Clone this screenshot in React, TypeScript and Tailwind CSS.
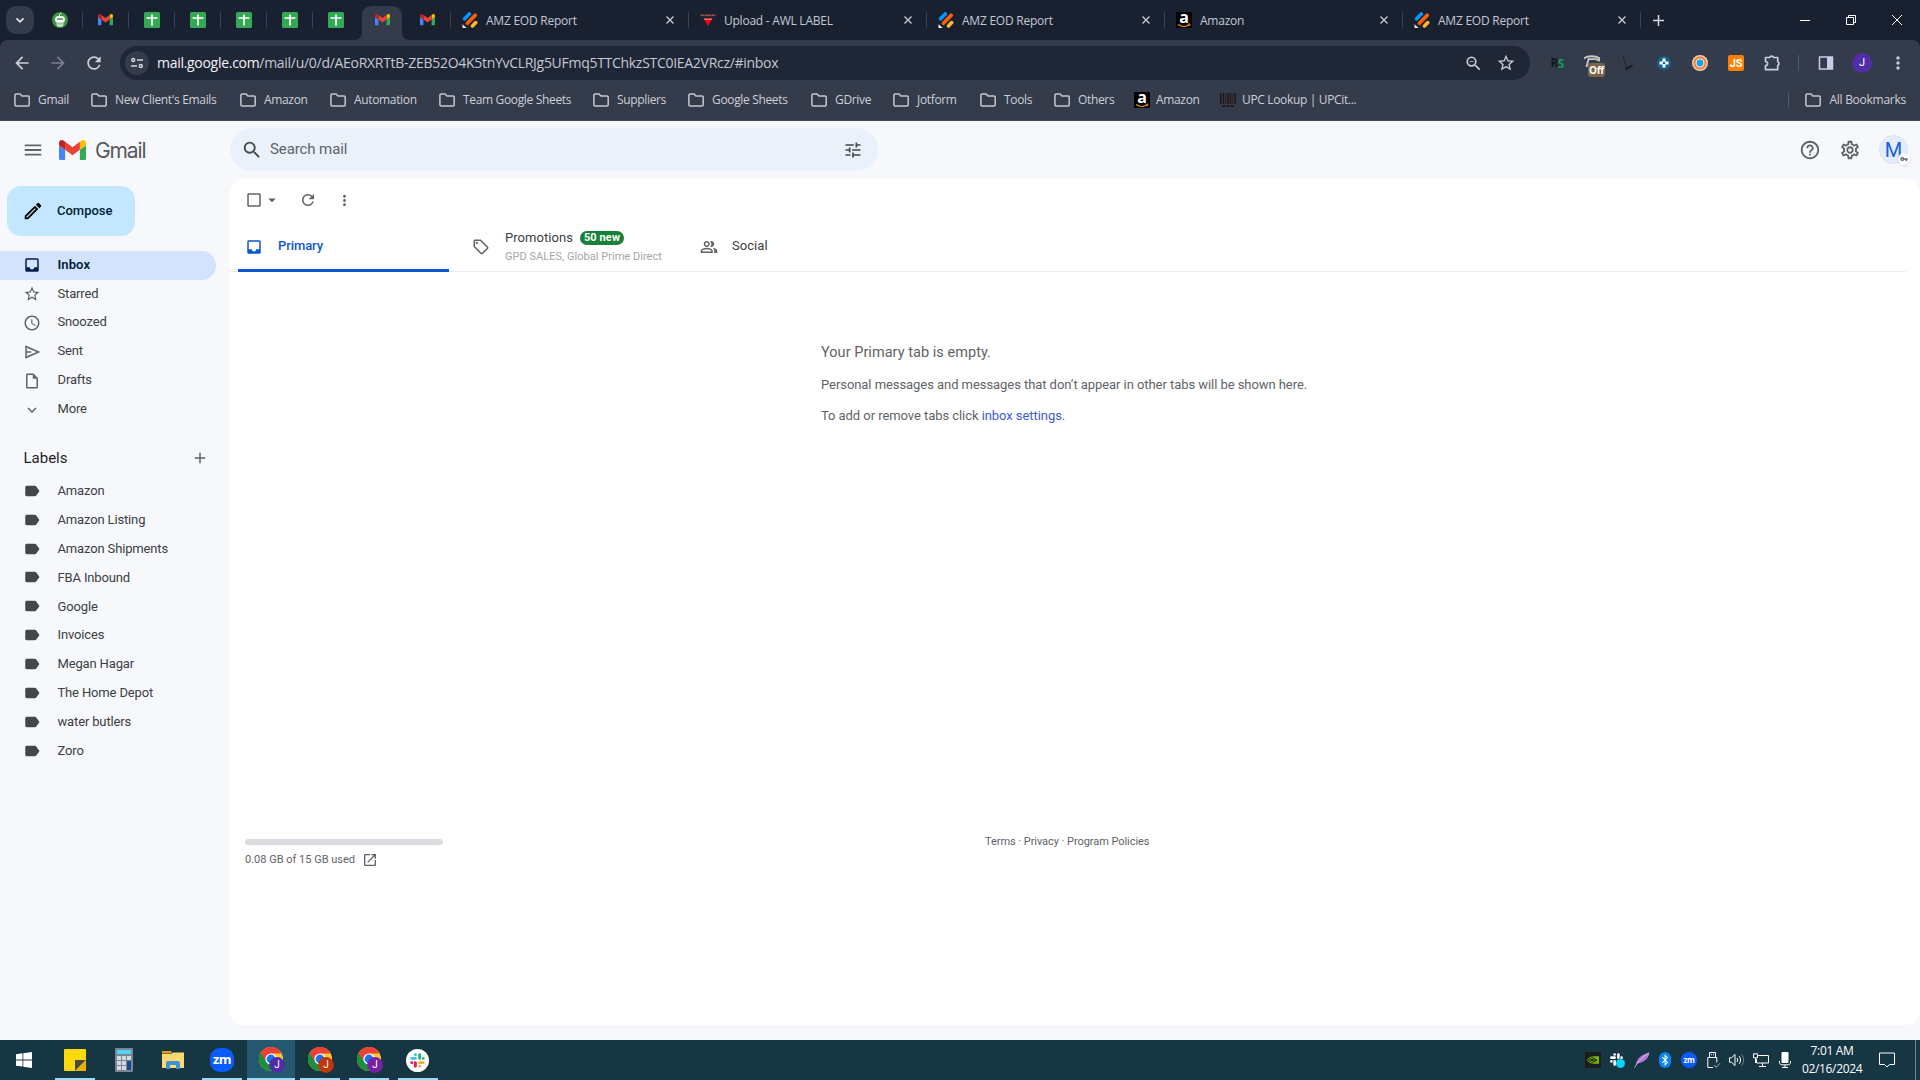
import React from 'react';
import {
  MdAccessTime,
  MdAdd,
  MdArrowBack,
  MdArrowDropDown,
  MdArrowForward,
  MdCheckBoxOutlineBlank,
  MdExpandMore,
  MdHelpOutline,
  MdInbox,
  MdLabel,
  MdMenu,
  MdMoreVert,
  MdOpenInNew,
  MdOutlineInsertDriveFile,
  MdOutlineLocalOffer,
  MdOutlineModeEdit,
  MdOutlinePeopleAlt,
  MdOutlineSettings,
  MdRefresh,
  MdSearch,
  MdStarBorder,
  MdTune,
  MdVpnKey,
  MdZoomOut,
} from 'react-icons/md';
import { FaBluetoothB } from 'react-icons/fa';

/* ---------- brand icons ---------- */

const GmailLogo = ({ className }: { className: string }) => (
  <svg viewBox="52 42 88 66" className={className}>
    <path fill="#4285f4" d="M58 108h14V74L52 59v43c0 3.32 2.69 6 6 6" />
    <path fill="#34a853" d="M120 108h14c3.32 0 6-2.69 6-6V59l-20 15" />
    <path fill="#fbbc04" d="M120 48v26l20-15v-8c0-7.42-8.47-11.65-14.4-7.2" />
    <path fill="#ea4335" d="M72 74V48l24 18 24-18v26L96 92" />
    <path fill="#c5221f" d="M52 51v8l20 15V48l-5.600-4.200c-5.940-4.450-14.400-.220-14.400 7.200" />
  </svg>
);

const SheetsIcon = () => (
  <svg viewBox="0 0 16 16" className="h-4 w-4">
    <rect width="16" height="16" rx="1.500" fill="#34a853" />
    <path d="M2.500 6h11M8 2.500v11" stroke="#fff" strokeWidth="1.700" />
  </svg>
);

const RobotIcon = () => (
  <svg viewBox="0 0 16 16" className="h-4 w-4">
    <circle cx="8" cy="8" r="8" fill="#3f9142" />
    <path d="M7.500 5V2.300l2-1" stroke="#fff" strokeWidth="1" fill="none" />
    <rect x="3.200" y="4.300" width="9.600" height="6.400" rx="2.200" fill="#fff" />
    <rect x="4.800" y="6.200" width="6.400" height="1.600" rx=".8" fill="#3f9142" />
    <path d="M4.200 11.600h7.600l-1.200 2.800H5.400z" fill="#fff" />
    <path d="M5 12.800h6" stroke="#3f9142" strokeWidth=".6" />
  </svg>
);

const JotformIcon = () => (
  <svg viewBox="0 0 16 16" className="h-4 w-4">
    <g strokeLinecap="round" strokeWidth="3.600">
      <path d="M2.600 6.800 7.300 2" stroke="#0099ff" />
      <path d="M5.400 11.300 13.200 3.200" stroke="#ff6100" />
      <path d="M10.500 13.900l3.200-3.300" stroke="#ffb629" />
    </g>
    <path d="M.5 12.200v3.300c0 .3.200.5.500.5h3.700z" fill="#fff" />
  </svg>
);

const AwlIcon = () => (
  <svg viewBox="0 0 16 16" className="h-4 w-4">
    <path d="M0 2.200h16v2.300H0z" fill="#5b2733" />
    <path d="M1 3.300h14" stroke="#b98f55" strokeWidth="1" strokeDasharray="1.200 1" />
    <path d="M3.600 6.500h8.800L8 14z" fill="#f5040a" />
    <path d="M3.600 6.500h8.800l-.8 1.500H4.500z" fill="#ff6a6e" />
  </svg>
);

const AmazonIcon = () => (
  <div className="relative flex h-4 w-4 shrink-0 justify-center bg-black">
    <span className="h-4 text-[16px] leading-[11px] font-bold tracking-normal text-white">a</span>
    <svg viewBox="0 0 16 5" className="absolute bottom-0 left-0 h-[5px] w-4">
      <path d="M2.200 1.500c3.500 2.600 8 2.500 11 .3" stroke="#ff9900" strokeWidth="1.200" fill="none" />
      <path d="M11.800 1.200l2.300-.2-.6 2.200" stroke="#ff9900" strokeWidth=".8" fill="none" />
    </svg>
  </div>
);

const BarcodeIcon = () => (
  <svg viewBox="0 0 16 16" className="h-4 w-4">
    <path d="M.8 1v11M3.500 1v11M8 1v11M10.500 1v11M15.200 1v11" stroke="#231815" strokeWidth="1.500" />
    <path d="M5.800 1v11M12.800 1v11" stroke="#231815" strokeWidth=".8" />
    <path d="M2.500 14h3M6.500 14h3M10.500 14h3" stroke="#231815" strokeWidth="1.800" />
  </svg>
);

const FolderIcon = () => (
  <svg viewBox="0 0 16 16" className="h-4 w-4 shrink-0">
    <path d="M.9 3.200c0-.7.500-1.200 1.200-1.200h4l1.800 1.900h6.100c.7 0 1.200.5 1.200 1.200v7.700c0 .7-.5 1.200-1.200 1.200H2.100c-.7 0-1.200-.5-1.200-1.200z" fill="none" stroke="#c7c9cf" strokeWidth="1.500" />
  </svg>
);

const SendIcon = ({ className }: { className: string }) => (
  <svg viewBox="0 0 24 24" className={className} fill="none" stroke="currentColor" strokeWidth="2">
    <path d="M4 4.600 20.800 12 4 19.400zM4 12h7" />
  </svg>
);

const PuzzleIcon = () => (
  <svg viewBox="0 0 18 18" className="ml-[19px] h-[18px] w-[18px]">
    <path d="M2.500 3.500h4.200a2 2 0 0 1 3.800 0h4.200v4.200a2 2 0 0 1 0 3.800v4.200H2.500v-4a2.100 2.100 0 0 0 0-4.200z" fill="none" stroke="#c7cde6" strokeWidth="1.700" strokeLinejoin="round" />
  </svg>
);

const ChromeIcon = ({ letter, color }: { letter: string; color: string }) => (
  <svg viewBox="0 0 26 26" className="h-[26px] w-[26px]">
    <circle cx="12" cy="12" r="12" fill="#fcc934" />
    <path d="M1.600 6A12 12 0 0 0 12 24l5.200-9L12 12z" fill="#1e8e3e" />
    <path d="M12 6.500h10.700A12 12 0 0 0 1.600 6l5.200 8z" fill="#ea4335" />
    <circle cx="12" cy="12" r="5.600" fill="#fff" />
    <circle cx="12" cy="12" r="4.400" fill="#1a73e8" />
    <circle cx="18" cy="18" r="7.900" fill={color} />
    <text x="18" y="21.300" textAnchor="middle" fontSize="10" fill="#fff" fontFamily="Roboto, sans-serif">{letter}</text>
  </svg>
);

const SlackMark = ({ className, mono }: { className: string; mono?: boolean }) => (
  <svg viewBox="0 0 16 16" className={className}>
    <g strokeLinecap="round" strokeWidth="2.800">
      <path d="M6 2.600v0M2.600 6H6" stroke={mono ? '#fff' : '#36c5f0'} />
      <path d="M13.400 6v0M10 2.600V6" stroke={mono ? '#fff' : '#2eb67d'} />
      <path d="M10 13.400v0M10 10h3.400" stroke={mono ? '#fff' : '#ecb22e'} />
      <path d="M2.600 10v0M6 10v3.400" stroke={mono ? '#fff' : '#e01e5a'} />
    </g>
  </svg>
);

/* ---------- browser chrome ---------- */

const pinnedTabs: { icon: React.ReactNode; active?: boolean; divider?: boolean }[] = [
  { icon: <RobotIcon />, divider: true },
  { icon: <GmailLogo className="w-[15px]" />, divider: true },
  { icon: <SheetsIcon />, divider: true },
  { icon: <SheetsIcon />, divider: true },
  { icon: <SheetsIcon />, divider: true },
  { icon: <SheetsIcon />, divider: true },
  { icon: <SheetsIcon /> },
  { icon: <GmailLogo className="w-[15px]" />, active: true },
  { icon: <GmailLogo className="w-[15px]" />, divider: true },
];

const tabs = [
  { icon: <JotformIcon />, title: 'AMZ EOD Report' },
  { icon: <AwlIcon />, title: 'Upload - AWL LABEL' },
  { icon: <JotformIcon />, title: 'AMZ EOD Report' },
  { icon: <AmazonIcon />, title: 'Amazon' },
  { icon: <JotformIcon />, title: 'AMZ EOD Report' },
];

const TabStrip = () => (
  <div className="flex h-10 items-center bg-[#192131] pl-1.5">
    <div className="flex h-7 w-7 items-center justify-center rounded-[10px] bg-[#343b4b]">
      <svg viewBox="0 0 10 10" className="h-2.5 w-2.5">
        <path d="M1.500 3.300 5 6.800l3.500-3.500" fill="none" stroke="#e3e5ea" strokeWidth="1.700" />
      </svg>
    </div>
    <div className="flex h-full pl-[3px]">
      {pinnedTabs.map((tab, i) =>
        tab.active ? (
          <div key={i} className="relative flex h-full w-[46px] items-end justify-center">
            <svg viewBox="0 0 56 34" className="absolute bottom-0 left-[-5px] h-[34px] w-14">
              <path d="M0 34c5 0 8-3 8-8V10C8 4 12 0 18 0h20c6 0 10 4 10 10v16c0 5 3 8 8 8z" fill="#343b4b" />
            </svg>
            <div className="relative flex h-10 items-center">{tab.icon}</div>
          </div>
        ) : (
          <div key={i} className="flex h-full w-[46px] items-center">
            <div className="flex flex-1 justify-center">{tab.icon}</div>
            <div className={tab.divider ? 'h-4 w-px bg-[#3b4354]' : 'h-4 w-px'} />
          </div>
        )
      )}
    </div>
    {tabs.map((tab, i) => (
      <div key={i} className="flex h-full w-[238px] items-center pl-[11px]">
        {tab.icon}
        <span className="ml-2 flex-1 pt-[2px] text-xs tracking-[-0.24px] text-[#c3c8d4]">{tab.title}</span>
        <svg viewBox="0 0 8 8" className="mr-[14px] h-2 w-2">
          <path d="M.5.5l7 7M7.500.5l-7 7" stroke="#c3c8d4" strokeWidth="1.400" />
        </svg>
        <div className="h-4 w-px bg-[#3b4354]" />
      </div>
    ))}
    <svg viewBox="0 0 10 10" className="ml-3 h-[11px] w-[11px]">
      <path d="M5 0v10M0 5h10" stroke="#d3d7e0" strokeWidth="1.400" />
    </svg>
    <div className="ml-auto flex items-center pr-[18px]">
      <svg viewBox="0 0 10 10" className="h-2.5 w-2.5">
        <path d="M0 5.500h10" stroke="#fff" />
      </svg>
      <svg viewBox="0 0 10 10" className="ml-9 h-2.5 w-2.5">
        <path d="M.5 2.500h7v7h-7zM2.500 2.500v-2h7v7h-2" fill="none" stroke="#fff" />
      </svg>
      <svg viewBox="0 0 10 10" className="ml-9 h-2.5 w-2.5">
        <path d="M0 0l10 10M10 0L0 10" stroke="#fff" />
      </svg>
    </div>
  </div>
);

const AddressRow = () => (
  <div className="flex h-[46px] items-center rounded-t-lg bg-[#343b4b] pl-3 pr-3">
    <MdArrowBack className="h-5 w-5 text-[#cdd1e0]" />
    <MdArrowForward className="ml-[16px] h-5 w-5 text-[#7b8190]" />
    <MdRefresh className="ml-[16px] h-5 w-5 text-[#cdd1e0]" />
    <div className="ml-[16px] flex h-[34px] w-[1410px] items-center rounded-full bg-[#1f2636] pl-[5px] pr-[14px]">
      <div className="flex h-6 w-6 items-center justify-center rounded-full bg-[#343b4b]">
        <svg viewBox="0 0 12 12" className="h-3 w-3" fill="none" stroke="#d5d8e0" strokeWidth="1.400">
          <circle cx="2.200" cy="3" r="1.500" />
          <path d="M6 3h6M0 9h6" />
          <circle cx="9.800" cy="9" r="1.500" />
        </svg>
      </div>
      <div className="ml-2 flex-1 text-sm tracking-[-0.29px] text-[#c5c9d3]">
        <span className="text-[#f3f4f6]">mail.google.com</span>
        /mail/u/0/d/AEoRXRTtB-ZEB52O4K5tnYvCLRJg5UFmq5TTChkzSTC0IEA2VRcz/#inbox
      </div>
      <MdZoomOut className="h-[19px] w-[19px] text-[#c7cbd6]" />
      <MdStarBorder className="ml-[13px] h-5 w-5 text-[#c7cbd6]" />
    </div>
    <div className="ml-auto flex h-full items-center">
      <div className="flex w-4 justify-center text-xs font-bold tracking-[-0.8px]">
        <span className="text-[#15181f]">R</span>
        <span className="mt-px text-[#0f9d58]">S</span>
      </div>
      <div className="relative ml-[19px] h-4 w-[22px]">
        <svg viewBox="0 0 16 16" className="h-4 w-4">
          <path d="M0 3.500C3 .5 12 .5 16 3.500l-1 2-3-1.300H4.500L2.500 12" fill="none" stroke="#c9c9c9" strokeWidth="1.800" />
        </svg>
        <span className="absolute left-1 top-[8px] rounded-[3px] bg-[#7b6548] px-px text-[10px] leading-[14px] font-bold tracking-[-0.3px] text-white">Off</span>
      </div>
      <svg viewBox="0 0 16 16" className="ml-[14px] h-4 w-4">
        <path d="M3 1l4 13" stroke="#14171d" strokeWidth=".7" />
        <path d="M5.500 14.500l7-4" stroke="#14171d" strokeWidth="1.800" />
      </svg>
      <svg viewBox="0 0 16 16" className="ml-5 h-4 w-4">
        <circle cx="8" cy="8" r="7" fill="#17608c" />
        <path d="M8 3.500v9M3.500 8h9" stroke="#fff" strokeWidth="3" />
        <circle cx="8" cy="8" r="1.300" fill="#17608c" />
      </svg>
      <svg viewBox="0 0 16 16" className="ml-5 h-4 w-4">
        <circle cx="8" cy="8" r="8" fill="#f2d3b8" />
        <circle cx="8" cy="8" r="5.600" fill="none" stroke="#ef8442" strokeWidth="2.200" />
        <circle cx="8" cy="8" r="4.200" fill="#e8eef2" />
        <circle cx="8" cy="8" r="3.400" fill="#1ba3e0" />
      </svg>
      <div className="ml-5 flex h-4 w-4 items-center justify-center rounded-[2px] bg-[#ff8000] font-['Roboto',sans-serif] text-[11px] leading-none font-bold tracking-[-0.3px] text-white">
        <span>JS</span>
      </div>
      <PuzzleIcon />
      <div className="ml-[17px] h-4 w-px bg-[#525a6c]" />
      <svg viewBox="0 0 16 16" className="ml-[19px] h-4 w-4">
        <path d="M1.500 2h13v12h-13z" fill="none" stroke="#c7cde6" strokeWidth="1.500" />
        <path d="M9 2h5.500v12H9z" fill="#c7cde6" />
      </svg>
      <div className="ml-[18px] flex h-5 w-5 items-center justify-center rounded-full bg-[#512da8] font-['Roboto',sans-serif] text-[11px] text-white">J</div>
      <MdMoreVert className="ml-4 h-5 w-5 text-[#c7cde6]" />
    </div>
  </div>
);

const bookmarks = [
  { label: 'Gmail', width: 'w-[77px]' },
  { label: "New Client's Emails", width: 'w-[149px]' },
  { label: 'Amazon', width: 'w-[90px]' },
  { label: 'Automation', width: 'w-[109px]' },
  { label: 'Team Google Sheets', width: 'w-[154px]' },
  { label: 'Suppliers', width: 'w-[95px]' },
  { label: 'Google Sheets', width: 'w-[123px]' },
  { label: 'GDrive', width: 'w-[82px]' },
  { label: 'Jotform', width: 'w-[87px]' },
  { label: 'Tools', width: 'w-[74px]' },
  { label: 'Others', width: 'w-[80px]' },
  { label: 'Amazon', width: 'w-[86px]', icon: <AmazonIcon /> },
  { label: 'UPC Lookup | UPCit...', width: 'w-[160px]', icon: <BarcodeIcon /> },
];

const BookmarkBar = () => (
  <div className="flex h-[35px] items-center border-b border-[#454753] bg-[#343b4b] pb-[6px] pl-3.5 pr-[14px] text-xs tracking-[-0.34px] text-[#cdd0d6]">
    {bookmarks.map((b, i) => (
      <div key={i} className={`flex shrink-0 items-center whitespace-nowrap ${b.icon ? 'gap-1.5' : 'gap-2'} ${b.width}`}>
        {b.icon || <FolderIcon />}
        <span>{b.label}</span>
      </div>
    ))}
    <div className="ml-auto h-4 w-px bg-[#525a6c]" />
    <div className="ml-4 flex items-center gap-2 whitespace-nowrap">
      <FolderIcon />
      <span className="tracking-[-0.26px]">All Bookmarks</span>
    </div>
  </div>
);

/* ---------- gmail ---------- */

const folders = [
  { icon: MdInbox, label: 'Inbox', active: true },
  { icon: MdStarBorder, label: 'Starred' },
  { icon: MdAccessTime, label: 'Snoozed' },
  { icon: SendIcon, label: 'Sent' },
  { icon: MdOutlineInsertDriveFile, label: 'Drafts' },
  { icon: MdExpandMore, label: 'More' },
];

const labels = [
  'Amazon',
  'Amazon Listing',
  'Amazon Shipments',
  'FBA Inbound',
  'Google',
  'Invoices',
  'Megan Hagar',
  'The Home Depot',
  'water butlers',
  'Zoro',
];

const GmailHeader = () => (
  <header className="flex h-[58px] items-center pb-px pr-3">
    <div className="flex w-[230px] items-center pl-[22px]">
      <MdMenu className="h-[22px] w-[22px] text-[#5f6368]" />
      <GmailLogo className="mt-px ml-[15px] w-[27px]" />
      <span className="ml-[9px] pt-[2px] font-['Inter',sans-serif] text-[21px] tracking-[-1.1px] text-[#56595d]">Gmail</span>
    </div>
    <div className="flex h-[43px] w-[648px] items-center rounded-full bg-[#eaf1fb] pl-[11px] pr-[15px]">
      <MdSearch className="h-[22px] w-[22px] text-[#444746]" />
      <span className="ml-[7px] flex-1 text-[15px] tracking-[-0.1px] text-[#5f6368]">Search mail</span>
      <MdTune className="h-5 w-5 text-[#444746]" />
    </div>
    <div className="ml-auto flex items-center">
      <MdHelpOutline className="h-[22px] w-[22px] text-[#5f6368]" />
      <MdOutlineSettings className="ml-[18px] h-[22px] w-[22px] text-[#5f6368]" />
      <div className="relative ml-[18px] flex h-[29px] w-[29px] items-center justify-center rounded-full border border-[#d8e3f5] bg-[#e4edfb] text-xl text-[#1a5fe0]">
        <span>M</span>
        <span className="absolute -right-[3px] -bottom-0.5 flex h-3 w-3 items-center justify-center rounded-full bg-white shadow-sm">
          <MdVpnKey className="h-2 w-2 text-[#5f6368]" />
        </span>
      </div>
    </div>
  </header>
);

const Sidebar = () => (
  <nav className="w-[230px] shrink-0 pt-[7px] text-[13px] tracking-[-0.15px] text-[#3c4043]">
    <button className="ml-[7px] flex h-[50px] w-32 items-center rounded-[14px] bg-[#c2e7ff] pl-[15px] text-[#001d35]">
      <MdOutlineModeEdit className="h-[22px] w-[22px] text-black" />
      <span className="ml-[13px] font-medium tracking-normal">Compose</span>
    </button>
    <ul className="pt-[15px]">
      {folders.map(({ icon: Icon, label, active }) => (
        <li
          key={label}
          className={
            active
              ? 'flex h-[28.9px] w-[216px] items-center rounded-r-full bg-[#d3e3fd] pl-[23px] font-semibold tracking-[0.1px] text-[#001d35]'
              : 'flex h-[28.9px] w-[216px] items-center pl-[23px]'
          }
        >
          <Icon className={active ? 'h-[18px] w-[18px] text-[#041e49]' : 'h-[18px] w-[18px] text-[#5f6368]'} />
          <span className="ml-[16.500px] pb-[2px]">{label}</span>
        </li>
      ))}
    </ul>
    <div className="mt-[17px] flex h-[34px] items-center justify-between pl-[23.500px] pr-[21px] text-[#1f1f1f]">
      <span className="text-[15px] tracking-normal">Labels</span>
      <MdAdd className="h-[18px] w-[18px] text-[#5f6368]" />
    </div>
    <ul className="pt-px">
      {labels.map((label) => (
        <li key={label} className="flex h-[28.9px] items-center pl-[23px]">
          <MdLabel className="h-[18px] w-[18px] text-[#444746]" />
          <span className="ml-[16.500px]">{label}</span>
        </li>
      ))}
    </ul>
  </nav>
);

const MailPanel = () => (
  <main className="flex h-[846px] flex-1 flex-col rounded-[14px] bg-white text-[#5f6368]">
    <div className="flex h-[42px] items-center pl-[15px]">
      <MdCheckBoxOutlineBlank className="h-[18px] w-[18px]" />
      <MdArrowDropDown className="h-[18px] w-[18px]" />
      <MdRefresh className="ml-[18px] h-[18px] w-[18px]" />
      <MdMoreVert className="ml-[19px] h-[17px] w-[17px]" />
    </div>

    <div className="mr-[14px] flex h-[51px] border-b border-[#eceff1] pl-2 text-[13px] tracking-[0.05px]">
      <div className="mb-[-1px] flex w-[211px] items-center border-b-[3px] border-[#0b57d0] pl-[7px] text-[#0b57d0]">
        <MdInbox className="mt-[3px] h-[18px] w-[18px]" />
        <span className="ml-[15px] pt-[2px] font-medium tracking-[-0.1px]">Primary</span>
      </div>
      <div className="flex w-[228px] items-center pl-[23px]">
        <MdOutlineLocalOffer className="mt-px h-[18px] w-[18px]" />
        <div className="ml-[15px] whitespace-nowrap">
          <div className="flex items-center text-[#3c4043]">
            Promotions
            <span className="ml-[7px] rounded-full bg-[#188038] px-1 text-[11px] leading-[14px] font-bold tracking-[0.1px] text-white">50 new</span>
          </div>
          <div className="pt-px text-[11px] leading-[15px] tracking-[0.03px] text-[#a3a6aa]">GPD SALES, Global Prime Direct</div>
        </div>
      </div>
      <div className="flex items-center pl-[23px]">
        <MdOutlinePeopleAlt className="mt-[2px] h-[18px] w-[18px]" />
        <span className="ml-[14px] text-[#3c4043]">Social</span>
      </div>
    </div>

    <div className="flex h-[548px] flex-col gap-[12px] pl-[591px] pt-[71px] text-[13px] leading-[19.500px] tracking-[-0.06px]">
      <p className="pt-px text-[14.500px] leading-[18.500px] tracking-[0.04px]">Your Primary tab is empty.</p>
      <p>Personal messages and messages that don’t appear in other tabs will be shown here.</p>
      <p>
        To add or remove tabs click <a className="text-[#3b5bd9]">inbox settings</a>.
      </p>
    </div>

    <div className="flex pl-[15px] text-[11px]">
      <div className="w-[740px] pt-[19px]">
        <div className="h-1.5 w-[198px] rounded-full bg-[#dadce0]" />
        <div className="flex items-center pt-1.5">
          <span className="pt-px">0.08 GB of 15 GB used</span>
          <MdOpenInNew className="ml-[7px] h-4 w-4" />
        </div>
      </div>
      <div className="pt-[14px] tracking-[-0.06px]">Terms · Privacy · Program Policies</div>
    </div>
  </main>
);

/* ---------- windows taskbar ---------- */

const TaskItem = ({ children, width, bar, active }: { children: React.ReactNode; width: string; bar?: string; active?: boolean }) => (
  <div className={`flex h-10 flex-col items-center ${width} ${active ? 'bg-[#245a70]' : ''}`}>
    <div className="flex flex-1 items-center justify-center pt-0.5">{children}</div>
    <div className={bar ? `h-0.5 bg-[#9bdcf5] ${bar}` : 'h-0.5'} />
  </div>
);

const Taskbar = () => (
  <footer className="flex h-10 items-center bg-[#163643] text-white">
    <TaskItem width="w-[49px]">
      <svg viewBox="0 0 16 16" className="mr-px h-4 w-4" fill="#fff">
        <path d="M0 2.200 6.500 1.300v6.200H0zM7.300 1.200 16 0v7.500H7.300zM0 8.400h6.500v6.200L0 13.700zM7.300 8.400H16V16l-8.700-1.200z" />
      </svg>
    </TaskItem>
    <TaskItem width="w-[51px]" bar="w-10">
      <svg viewBox="0 0 22 22" className="h-[22px] w-[22px]">
        <rect width="22" height="22" rx="1" fill="#ffd80e" />
        <path d="M11 22V11h11z" fill="#4a4843" />
        <path d="M11 22 22 11v11z" fill="#e8b300" />
      </svg>
    </TaskItem>
    <TaskItem width="w-[48px]">
      <svg viewBox="0 0 18 24" className="h-6 w-[18px]">
        <rect width="18" height="24" rx="1" fill="#7a8793" />
        <rect x="2" y="2" width="14" height="4" fill="#4cd4fb" />
        <path d="M2 8h4v4H2zM7 8h4v4H7zM12 8h4v4h-4zM2 13h4v4H2zM7 13h4v4H7zM2 18h4v4H2zM7 18h4v4H7z" fill="#d5dade" />
        <path d="M12 13h4v9h-4z" fill="#174a8c" />
      </svg>
    </TaskItem>
    <TaskItem width="w-[49px]">
      <svg viewBox="0 0 22 18" className="h-[18px] w-[22px]">
        <path d="M0 0h9l1.500 2.500H0z" fill="#e39b12" />
        <path d="M0 3h9.500L11 1.500h11V17H0z" fill="#fcd872" />
        <path d="M4 18v-6c0-1 .8-2 2-2h10c1.200 0 2 1 2 2v6h-4v-4H8v4z" fill="#3c93d6" />
      </svg>
    </TaskItem>
    <TaskItem width="w-[50px]" bar="w-10">
      <div className="flex h-6 w-6 items-center justify-center rounded-[10px] bg-[#0b5cff] pb-0.5 text-[13px] leading-none font-bold tracking-[-0.5px]">
        <span>zm</span>
      </div>
    </TaskItem>
    <TaskItem width="w-12" bar="w-12" active>
      <div className="pl-px"><ChromeIcon letter="J" color="#512da8" /></div>
    </TaskItem>
    <TaskItem width="w-[50px]" bar="w-10">
      <div className="pl-[2px]"><ChromeIcon letter="J" color="#bf360c" /></div>
    </TaskItem>
    <TaskItem width="w-12" bar="w-10">
      <div className="pl-px"><ChromeIcon letter="J" color="#7b1fa2" /></div>
    </TaskItem>
    <TaskItem width="w-[49px]" bar="w-10">
      <div className="flex h-[23px] w-[23px] items-center justify-center rounded-full bg-white">
        <SlackMark className="h-[17px] w-[17px]" />
      </div>
    </TaskItem>

    <div className="ml-auto flex h-full items-center">
      <div className="flex h-4 w-4 items-center justify-center bg-[#1d1d1d]">
        <svg viewBox="0 0 12 8" className="h-2 w-3" fill="none" stroke="#76b900" strokeWidth="1">
          <path d="M.5 4C2 1.500 4 1 5.500 1s3 1.200 3 1.200M.5 4c1.500 2.500 3.500 3 5 3s3-1.500 3.500-2.300M2.500 4c.8-1.300 2-1.600 3-1.500s2 1.200 2 1.500-1 1.500-2 1.500-2.500-.5-3-1.500" />
          <path d="M5.500.3H12v7.400H5.500l5-3.200z" fill="#76b900" stroke="none" />
        </svg>
      </div>
      <div className="relative ml-2 h-4 w-4">
        <SlackMark className="h-[15px] w-[15px]" mono />
        <span className="absolute right-0 bottom-0 h-[9px] w-[9px] rounded-full bg-[#00d4f5]" />
      </div>
      <svg viewBox="0 0 16 16" className="ml-[9px] h-4 w-4">
        <path d="M2 13C2 7 8 2 15.500.5c-.5 5-5 10-12 11z" fill="#b176cf" />
        <path d="M.5 15.500C4 9 9 5 15 1" stroke="#e4cdf0" strokeWidth=".8" fill="none" />
      </svg>
      <div className="ml-[9px] flex h-4 w-3 items-center justify-center rounded-full bg-[#0a84f5]">
        <FaBluetoothB className="h-3 w-3" />
      </div>
      <div className="ml-[10px] flex h-4 w-4 items-center justify-center rounded-full bg-[#0b5cff] pb-px text-[8px] leading-none font-bold tracking-[-0.3px]">
        <span>zm</span>
      </div>
      <svg viewBox="0 0 14 17" className="ml-[10px] h-[17px] w-3.5" fill="none" stroke="#fff">
        <path d="M2.500 5V.5h6V5M.8 15.500V5.500h9v5M.8 15.500H6M4.500 2.200v1M6.500 2.200v1" />
        <path d="M7 13l2 2.300 4-4" stroke="#a9b8bf" />
      </svg>
      <svg viewBox="0 0 16 14" className="ml-[8px] h-3.5 w-4" fill="none" stroke="#fff">
        <path d="M.5 4.800h2L6 1.500v11L2.500 9.200h-2zM8 5c.9 1.200.9 2.800 0 4M10.200 3.200c1.800 2.200 1.800 5.400 0 7.600" />
        <path d="M12.500 1.200c2.800 3.300 2.800 8.300 0 11.600" stroke="#6f8790" />
      </svg>
      <svg viewBox="0 0 16 14" className="ml-[8px] h-3.5 w-4" fill="none" stroke="#fff">
        <path d="M5 2.500h10.500v7.500H3.500V6M9.500 10v3M6 13.500h7M.5.8h4v4h-4zM2.500 5v5" />
      </svg>
      <svg viewBox="0 0 12 16" className="ml-[10px] h-4 w-3">
        <rect x="2.500" y="0" width="7" height="11" rx="1" fill="#fff" />
        <path d="M.5 9v1.500c0 1.300 1 2.300 2.300 2.300h6.400c1.300 0 2.300-1 2.300-2.300V9M6 13v2.500M3 15.500h6" fill="none" stroke="#fff" />
      </svg>
      <div className="ml-[11px] w-[60px] text-center text-xs leading-[18px] tracking-[-0.35px] whitespace-nowrap">
        <div>7:01 AM</div>
        <div>02/16/2024</div>
      </div>
      <svg viewBox="0 0 16 16" className="ml-[17px] h-4 w-4">
        <path d="M.5 1h15v11.500h-5L8 15l-2.500-2.500h-5z" fill="none" stroke="#fff" />
      </svg>
      <div className="ml-5 mr-1 h-full w-px bg-[#738991]" />
    </div>
  </footer>
);

export default function App() {
  return (
    <div className="flex h-[1080px] w-[1920px] flex-col overflow-hidden bg-[#f6f8fc] font-['Open_Sans',sans-serif]">
      <div className="bg-[#192131]">
        <TabStrip />
        <AddressRow />
        <BookmarkBar />
      </div>
      <div className="flex-1 font-['Roboto',sans-serif]">
        <GmailHeader />
        <div className="flex">
          <Sidebar />
          <MailPanel />
        </div>
      </div>
      <Taskbar />
    </div>
  );
}
